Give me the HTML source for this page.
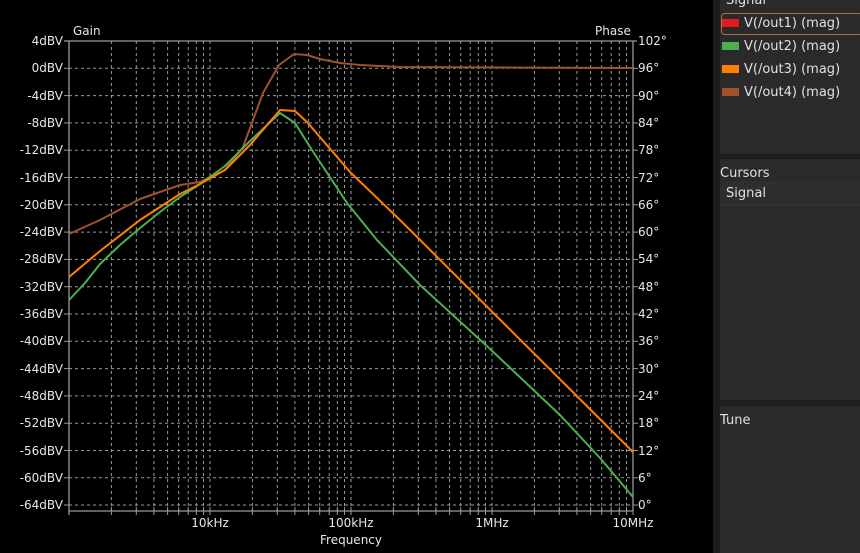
<!DOCTYPE html>
<html><head><meta charset="utf-8"><style>
html,body{margin:0;padding:0;background:#000;width:860px;height:553px;overflow:hidden}
svg{position:absolute;left:0;top:0}
text{font-family:"DejaVu Sans","Liberation Sans",sans-serif;font-size:12px;fill:#e6e6e6}
.p{position:absolute;background:#2a2a2a;font-family:"DejaVu Sans","Liberation Sans",sans-serif;font-size:13px;color:#e0e0e0}
</style></head><body>
<svg width="713" height="553" viewBox="0 0 713 553">
<defs>
<g id="dec" stroke="#9a9a9a" stroke-width="1" stroke-dasharray="3,3">
<line x1="42.4" y1="41" x2="42.4" y2="511"/><line x1="67.3" y1="41" x2="67.3" y2="511"/>
<line x1="84.9" y1="41" x2="84.9" y2="511"/><line x1="98.6" y1="41" x2="98.6" y2="511"/>
<line x1="109.7" y1="41" x2="109.7" y2="511"/><line x1="119.2" y1="41" x2="119.2" y2="511"/>
<line x1="127.3" y1="41" x2="127.3" y2="511"/><line x1="134.5" y1="41" x2="134.5" y2="511"/>
<line x1="141" y1="41" x2="141" y2="511"/>
</g>
<g id="tk" stroke="#9a9a9a" stroke-width="1">
<line x1="42.4" y1="507" x2="42.4" y2="515"/><line x1="67.3" y1="507" x2="67.3" y2="515"/>
<line x1="84.9" y1="507" x2="84.9" y2="515"/><line x1="98.6" y1="507" x2="98.6" y2="515"/>
<line x1="109.7" y1="507" x2="109.7" y2="515"/><line x1="119.2" y1="507" x2="119.2" y2="515"/>
<line x1="127.3" y1="507" x2="127.3" y2="515"/><line x1="134.5" y1="507" x2="134.5" y2="515"/>
<line x1="141" y1="507" x2="141" y2="515"/>
</g>
</defs>
<g transform="translate(69,0)"><use href="#dec"/><use href="#tk"/></g>
<g transform="translate(210,0)"><use href="#dec"/><use href="#tk"/></g>
<g transform="translate(351,0)"><use href="#dec"/><use href="#tk"/></g>
<g transform="translate(492,0)"><use href="#dec"/><use href="#tk"/></g>
<g stroke="#9a9a9a" stroke-width="1" stroke-dasharray="3,3">
<line x1="69" x2="633" y1="68.3" y2="68.3"/><line x1="69" x2="633" y1="95.6" y2="95.6"/>
<line x1="69" x2="633" y1="122.9" y2="122.9"/><line x1="69" x2="633" y1="150.2" y2="150.2"/>
<line x1="69" x2="633" y1="177.5" y2="177.5"/><line x1="69" x2="633" y1="204.8" y2="204.8"/>
<line x1="69" x2="633" y1="232.1" y2="232.1"/><line x1="69" x2="633" y1="259.4" y2="259.4"/>
<line x1="69" x2="633" y1="286.7" y2="286.7"/><line x1="69" x2="633" y1="314" y2="314"/>
<line x1="69" x2="633" y1="341.3" y2="341.3"/><line x1="69" x2="633" y1="368.6" y2="368.6"/>
<line x1="69" x2="633" y1="395.9" y2="395.9"/><line x1="69" x2="633" y1="423.2" y2="423.2"/>
<line x1="69" x2="633" y1="450.5" y2="450.5"/><line x1="69" x2="633" y1="477.8" y2="477.8"/>
<line x1="69" x2="633" y1="505" y2="505"/>
</g>
<g stroke="#9a9a9a" stroke-width="1.3" fill="none">
<line x1="64" x2="637" y1="41" y2="41"/>
<line x1="69" x2="69" y1="41" y2="515"/>
<line x1="633" x2="633" y1="41" y2="511"/>
<line x1="69" x2="633" y1="511" y2="511"/>
</g>
<g stroke="#9a9a9a" stroke-width="1">
<line x1="64" x2="69" y1="68.3" y2="68.3"/><line x1="64" x2="69" y1="95.6" y2="95.6"/><line x1="64" x2="69" y1="122.9" y2="122.9"/><line x1="64" x2="69" y1="150.2" y2="150.2"/><line x1="64" x2="69" y1="177.5" y2="177.5"/><line x1="64" x2="69" y1="204.8" y2="204.8"/><line x1="64" x2="69" y1="232.1" y2="232.1"/><line x1="64" x2="69" y1="259.4" y2="259.4"/><line x1="64" x2="69" y1="286.7" y2="286.7"/><line x1="64" x2="69" y1="314" y2="314"/><line x1="64" x2="69" y1="341.3" y2="341.3"/><line x1="64" x2="69" y1="368.6" y2="368.6"/><line x1="64" x2="69" y1="395.9" y2="395.9"/><line x1="64" x2="69" y1="423.2" y2="423.2"/><line x1="64" x2="69" y1="450.5" y2="450.5"/><line x1="64" x2="69" y1="477.8" y2="477.8"/><line x1="64" x2="69" y1="505" y2="505"/>
<line x1="633" x2="638" y1="68.3" y2="68.3"/><line x1="633" x2="638" y1="95.6" y2="95.6"/><line x1="633" x2="638" y1="122.9" y2="122.9"/><line x1="633" x2="638" y1="150.2" y2="150.2"/><line x1="633" x2="638" y1="177.5" y2="177.5"/><line x1="633" x2="638" y1="204.8" y2="204.8"/><line x1="633" x2="638" y1="232.1" y2="232.1"/><line x1="633" x2="638" y1="259.4" y2="259.4"/><line x1="633" x2="638" y1="286.7" y2="286.7"/><line x1="633" x2="638" y1="314" y2="314"/><line x1="633" x2="638" y1="341.3" y2="341.3"/><line x1="633" x2="638" y1="368.6" y2="368.6"/><line x1="633" x2="638" y1="395.9" y2="395.9"/><line x1="633" x2="638" y1="423.2" y2="423.2"/><line x1="633" x2="638" y1="450.5" y2="450.5"/><line x1="633" x2="638" y1="477.8" y2="477.8"/><line x1="633" x2="638" y1="505" y2="505"/>
</g>
<g fill="none" stroke-width="2" stroke-linejoin="round">
<polyline stroke="#a0522d" points="69,234 100,220 140,199 180,185 200,182 225,170 243,147 263,93 279,65 294,54 307,55 320,59 340,63 360,65 400,67 633,68"/>
<polyline stroke="#4caf50" points="69,300 85,283 100,264 120,245 140,228 160,212 180,197 200,184 225,166 250,141 280,113 295,123 310,147 347,203 377,240 420,285 489,348 560,415 600,458 633,497"/>
<polyline stroke="#ff7f00" points="69,277 100,251 140,220 180,194 200,184 225,170 250,145 280,110 295,111 307,122 350,172 400,220 633,452"/>
</g>
<text x="73" y="35">Gain</text>
<text x="595" y="35">Phase</text>
<g text-anchor="end">
<text x="63" y="45">4dBV</text><text x="63" y="72">0dBV</text><text x="63" y="100">-4dBV</text><text x="63" y="127">-8dBV</text><text x="63" y="154">-12dBV</text><text x="63" y="182">-16dBV</text><text x="63" y="209">-20dBV</text><text x="63" y="236">-24dBV</text><text x="63" y="263">-28dBV</text><text x="63" y="291">-32dBV</text><text x="63" y="318">-36dBV</text><text x="63" y="345">-40dBV</text><text x="63" y="373">-44dBV</text><text x="63" y="400">-48dBV</text><text x="63" y="427">-52dBV</text><text x="63" y="455">-56dBV</text><text x="63" y="482">-60dBV</text><text x="63" y="509">-64dBV</text>
</g>
<g>
<text x="638" y="45">102°</text><text x="638" y="72">96°</text><text x="638" y="100">90°</text><text x="638" y="127">84°</text><text x="638" y="154">78°</text><text x="638" y="182">72°</text><text x="638" y="209">66°</text><text x="638" y="236">60°</text><text x="638" y="263">54°</text><text x="638" y="291">48°</text><text x="638" y="318">42°</text><text x="638" y="345">36°</text><text x="638" y="373">30°</text><text x="638" y="400">24°</text><text x="638" y="427">18°</text><text x="638" y="455">12°</text><text x="638" y="482">6°</text><text x="638" y="509">0°</text>
</g>
<g text-anchor="middle">
<text x="210" y="527">10kHz</text><text x="351" y="527">100kHz</text><text x="492" y="527">1MHz</text><text x="633" y="527">10MHz</text>
<text x="351" y="544">Frequency</text>
</g>
</svg>
<div style="position:absolute;left:713px;top:0;width:7px;height:553px;background:#1c1c1c"></div>
<div class="p" style="left:720px;top:0;width:140px;height:154px">
<div style="position:absolute;left:6px;top:-7px">Signal</div>
<div style="position:absolute;left:1px;top:13px;width:140px;height:20px;border:1px solid #b56a4a;border-radius:4px"></div>
<div style="position:absolute;left:2px;top:19px;width:17px;height:8px;background:#e31a1c"></div>
<div style="position:absolute;left:24px;top:16px">V(/out1) (mag)</div>
<div style="position:absolute;left:2px;top:42px;width:17px;height:8px;background:#4caf50"></div>
<div style="position:absolute;left:24px;top:39px">V(/out2) (mag)</div>
<div style="position:absolute;left:2px;top:65px;width:17px;height:8px;background:#ff7f00"></div>
<div style="position:absolute;left:24px;top:62px">V(/out3) (mag)</div>
<div style="position:absolute;left:2px;top:88px;width:17px;height:8px;background:#a0522d"></div>
<div style="position:absolute;left:24px;top:85px">V(/out4) (mag)</div>
</div>
<div style="position:absolute;left:720px;top:154px;width:140px;height:5px;background:#1e1e1e"></div>
<div class="p" style="left:720px;top:159px;width:140px;height:241px">
<div style="position:absolute;left:0;top:7px">Cursors</div>
<div style="position:absolute;left:0;top:22px;width:140px;height:24px;background:#2e2e2e;border-bottom:1px solid #333"></div>
<div style="position:absolute;left:6px;top:27px">Signal</div>
</div>
<div style="position:absolute;left:720px;top:400px;width:140px;height:6px;background:#1e1e1e"></div>
<div class="p" style="left:720px;top:406px;width:140px;height:147px">
<div style="position:absolute;left:0;top:7px">Tune</div>
</div>
</body></html>
